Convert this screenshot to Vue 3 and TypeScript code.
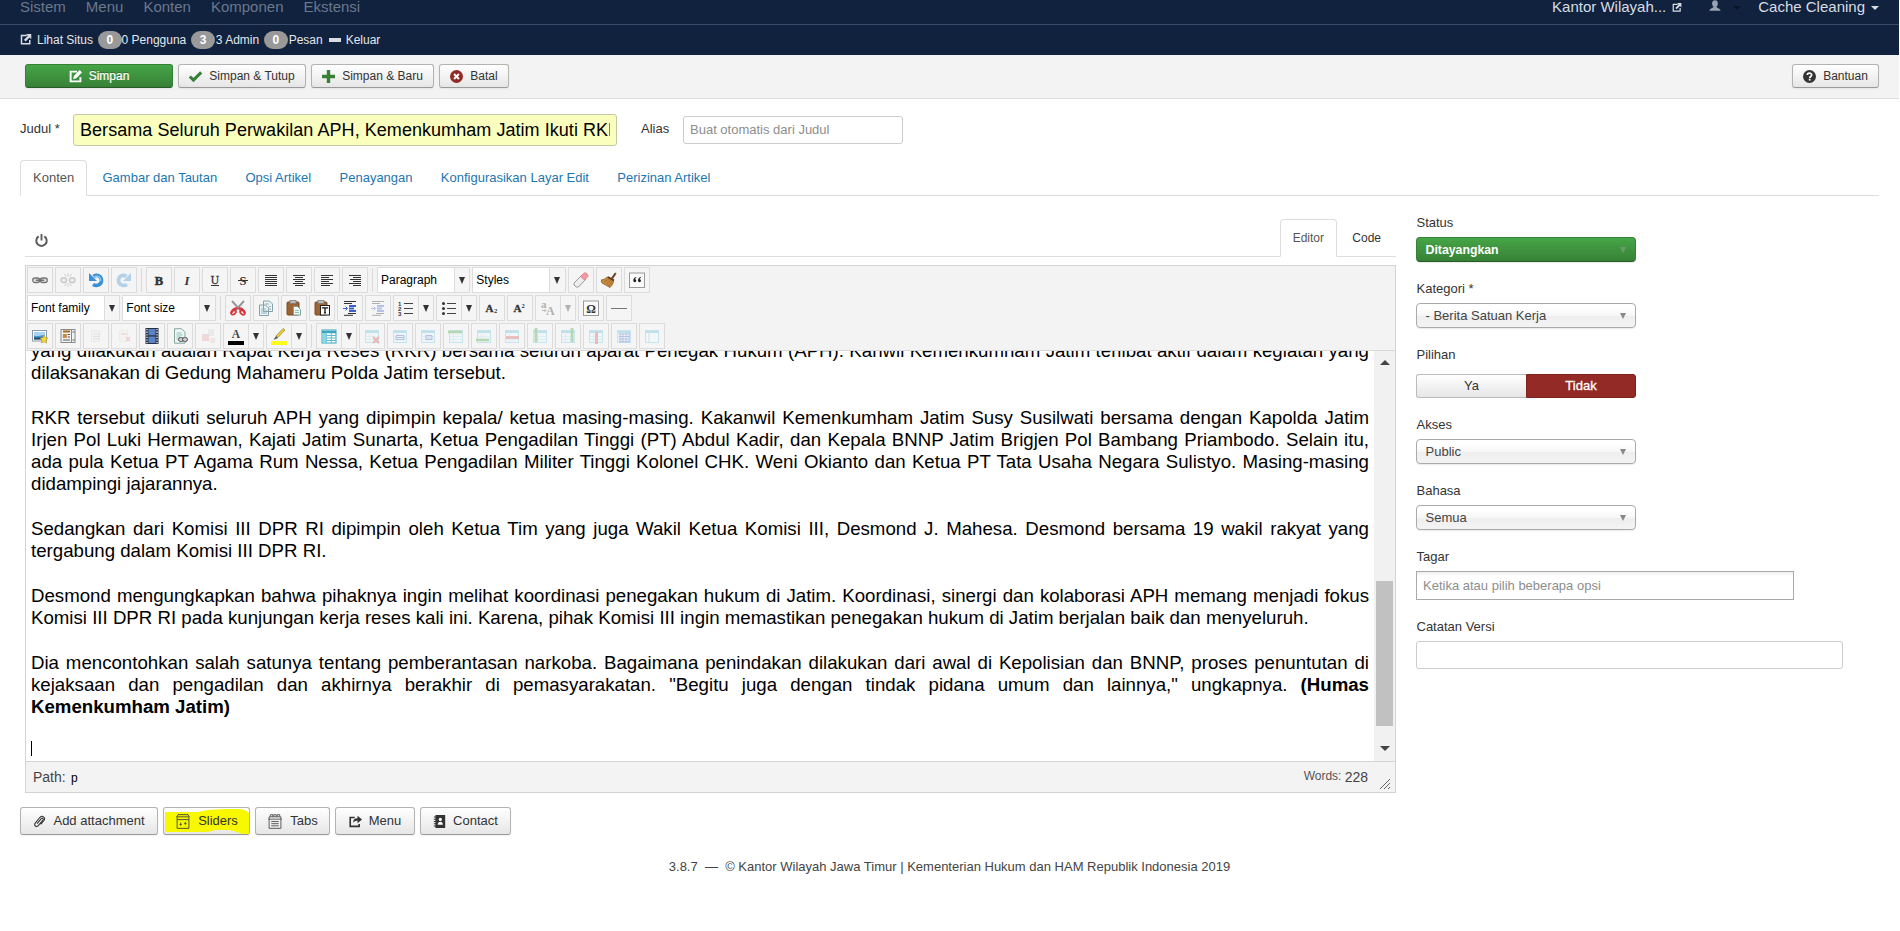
<script setup lang="ts">
interface Tool {
  kind?: 'btn' | 'sep' | 'list' | 'split'
  icon?: string
  label?: string
  off?: boolean
}

const share = '<path d="M9 2H2v11h11V8" fill="none" stroke="currentColor" stroke-width="2"/><path d="M8 0h7v7l-2.300-2.300L7.500 10 5.300 7.800l5.200-5.300z" fill="currentColor"/>'
const grid = (extra: string) =>
  `<rect x="1.500" y="2.500" width="13" height="12" fill="#e8f7fb" stroke="#74c6dd"/><path d="M1.500 4h13" stroke="#5ebbd6" stroke-width="2"/><path d="M1.500 8.500h13M1.500 11.500h13M5.500 4v10.500" stroke="#a5dcea" stroke-width=".8"/>${extra}`

const icons: Record<string, string> = {
  share,
  save: '<path d="M10 2H2v12h12V9" fill="none" stroke="currentColor" stroke-width="2.400"/><path d="M13 0l3 3-7 7-4 1.500L6 7.500z" fill="currentColor"/>',
  check: '<path d="M1 8l4.500 4.500L15 3" fill="none" stroke="#378137" stroke-width="3.800"/>',
  plus: '<path d="M8 0v16M0 8h16" stroke="#378137" stroke-width="4.200"/>',
  cancel: '<circle cx="8" cy="8" r="8" fill="#942a25"/><path d="M5 5l6 6M11 5l-6 6" stroke="#fff" stroke-width="2.400"/>',
  help: '<circle cx="8" cy="8" r="8" fill="#333"/><path d="M5.300 6.300C5.300 3 10.700 3 10.700 6.200 10.700 8 8.200 8 8.200 10" fill="none" stroke="#fff" stroke-width="2"/><path d="M7.100 11h2.200v2H7.100z" fill="#fff"/>',
  user: '<path d="M8 0c5 0 4.500 7 2 8.500 0 2 5 1.500 5.500 5.500H.5C1 10 6 10.500 6 8.500 3.500 7 3 0 8 0z" fill="currentColor"/>',
  power: '<path d="M4.500 3a6.400 6.400 0 1 0 7 0" fill="none" stroke="#5a5a5a" stroke-width="2.400"/><path d="M8 0v8" stroke="#5a5a5a" stroke-width="2.300"/>',
  clip: '<path d="M5 10.500l5.200-6c1.300-1.400 3.200.2 2 1.700L6.500 13c-2.200 2.500-6 0-3.800-3l6-7.200c2.600-2.900 7.300.4 4.800 4L9.500 11.500" fill="none" stroke="#333" stroke-width="1.300"/>',
  sliders: '<path d="M2.500.7h11M1.700 3h12.600v12.300H1.700zM1 3L3 .7M15 3L13 .7M1.700 6h12.600" fill="none" stroke="#4a4a3a" stroke-width="1"/><path d="M5.500 9v2.500M4.500 10.800l1 1.400 1-1.400zM10.500 12V9.500M9.500 10.200l1-1.400 1 1.400z" stroke="#4a4a3a" stroke-width=".7" fill="#4a4a3a"/>',
  tabs: '<path d="M3 3V.7h2.600V3M6.700 3V.7h2.600V3M10.400 3V.7H13V3M1.700 3h12.600v12.300H1.700zM.8 5.500h14.400M4 8h8M4 10.300h8M4 12.600h8" fill="none" stroke="#555" stroke-width="1"/>',
  menu: '<path d="M7 3H1.500v11h11v-3" fill="none" stroke="#333" stroke-width="2"/><path d="M5 9.500C5 5.500 7 4 10.500 4V1L16 5.500 10.500 10V7C8 7 6.500 7.500 5 9.500z" fill="#333"/>',
  contact: '<path d="M3 0h12v16H3z" fill="#333"/><path d="M1 2.500h3M1 5.300h3M1 8h3M1 10.700h3M1 13.500h3" stroke="#333" stroke-width="1.300"/><circle cx="9" cy="5.500" r="2" fill="#fff"/><path d="M5.800 12c0-5 6.400-5 6.400 0z" fill="#fff"/>',
  link: '<rect x=".7" y="6" width="7" height="4.500" rx="2.200" fill="#ddd" stroke="#777" stroke-width="1.300"/><rect x="8.300" y="6" width="7" height="4.500" rx="2.200" fill="#ddd" stroke="#777" stroke-width="1.300"/><path d="M4 8.200h8" stroke="#666" stroke-width="1.400"/>',
  unlink: '<rect x="1" y="6" width="5.500" height="4.500" rx="2" fill="#ddd" stroke="#777" stroke-width="1.300"/><rect x="9.500" y="6" width="5.500" height="4.500" rx="2" fill="#ddd" stroke="#777" stroke-width="1.300"/><path d="M8 1v4M8 11v4M4.500 2l1.500 2.500M11.500 2L10 4.500M4.500 14L6 11.500M11.500 14L10 11.500" stroke="#888"/>',
  undo: '<path d="M5.500 4.500C9 2 13.500 4 13.500 8.500c0 4-4.500 6.500-8.500 4" fill="none" stroke="#3b8fd6" stroke-width="3.600"/><path d="M1 1v8h8z" fill="#3b8fd6"/><path d="M6 5c4-2 7 0 7 4" fill="none" stroke="#9ccef5" stroke-width="1.200"/>',
  redo: '<path d="M10.500 4.500C7 2 2.500 4 2.500 8.500c0 4 4.500 6.500 8.500 4" fill="none" stroke="#3b8fd6" stroke-width="3.600"/><path d="M15 1v8H7z" fill="#3b8fd6"/>',
  bold: '<text x="8" y="12.500" text-anchor="middle" font-family="Liberation Serif,serif" font-weight="700" font-size="12.500" fill="#333" stroke="#333" stroke-width=".5">B</text>',
  italic: '<text x="8" y="12.500" text-anchor="middle" font-family="Liberation Serif,serif" font-weight="700" font-style="italic" font-size="12.500" fill="#333">I</text>',
  under: '<text x="8" y="11.500" text-anchor="middle" font-family="Liberation Serif,serif" font-size="11.500" fill="#333" stroke="#333" stroke-width=".3">U</text><path d="M4 13.500h8" stroke="#333"/>',
  strike: '<text x="8" y="12.500" text-anchor="middle" font-family="Liberation Serif,serif" font-weight="700" font-size="12.500" fill="#333">S</text><path d="M3 8.500h10" stroke="#333"/>',
  full: '<path d="M2 3.500h12M2 5.500h12M2 7.500h12M2 9.500h12M2 11.500h12M2 13.500h12" stroke="#333"/>',
  center: '<path d="M2 3.500h12M4 5.500h8M2 7.500h12M4 9.500h8M2 11.500h12M4 13.500h8" stroke="#333"/>',
  left: '<path d="M2 3.500h12M2 5.500h8M2 7.500h12M2 9.500h8M2 11.500h12M2 13.500h9" stroke="#333"/>',
  right: '<path d="M2 3.500h12M6 5.500h8M3 7.500h11M6 9.500h8M2 11.500h12M6 13.500h8" stroke="#333"/>',
  eraser: '<path d="M1 11l8-8 4 4-7.500 8H3.500L1 13z" fill="#eee" stroke="#999"/><path d="M7.500 4.500l3-3c1-1 2.500-.8 3.500.2s1.500 2.300.5 3.300l-3 3z" fill="#f59aa3" stroke="#d27580" stroke-width=".7"/>',
  broom: '<path d="M10 6l4-5.500 1.500 1L12 7z" fill="#6b4522"/><path d="M0 8c3 0 4.500-2 6.500-3l6 3c0 3-1 5-3.500 7.500L1 11z" fill="#c98a3f" stroke="#8b5d27" stroke-width=".8"/><path d="M7 5l6 3.500" stroke="#59351b" stroke-width="1.600"/><path d="M3 10l5-3M5 12l5-4M7.500 14l3.500-5" stroke="#8b5d27" stroke-width=".6"/>',
  quote: '<rect x=".5" y="1" width="15" height="14.500" fill="#fafafa" stroke="#999"/><path d="M7.300 5C4.800 5.300 4.300 7.300 4.300 8.700a1.500 1.500 0 1 0 1.800-1.500C6.100 6.500 6.500 6 7.300 5.800zM12 5C9.500 5.300 9 7.300 9 8.700a1.500 1.500 0 1 0 1.800-1.500c0-.7.4-1.200 1.200-1.400z" fill="#222"/>',
  cut: '<path d="M2 1l9 10M14 1L5 11" stroke="#999" stroke-width="2"/><path d="M7.500 8.500C5 8 1.500 10 1.500 13M8.500 8.500C11 8 14.500 10 14.500 13" fill="none" stroke="#d8363c" stroke-width="2.200"/><ellipse cx="3.500" cy="12.500" rx="2.500" ry="1.800" fill="none" stroke="#d8363c" stroke-width="1.800" transform="rotate(-35 3.500 12.500)"/><ellipse cx="12.500" cy="12.500" rx="2.500" ry="1.800" fill="none" stroke="#d8363c" stroke-width="1.800" transform="rotate(35 12.500 12.500)"/>',
  copy: '<path d="M5.500 1h6l3 3v7.500h-9zM1.500 5h6l3 3v7.500h-9z" fill="#eaf3f5" stroke="#8aa0a8"/><path d="M3 9h5M3 11h6M3 13h6M7 4h4M11 6.500h2M11 9h2" stroke="#8fb6bd"/>',
  paste: '<rect x="1" y="2" width="12" height="13" rx="1" fill="#9c6335" stroke="#7c4a22"/><rect x="4" y=".5" width="6" height="3" fill="#bbb" stroke="#777" stroke-width=".7"/><path d="M7.500 6.500h4l3 3V15h-7z" fill="#f3fbf9" stroke="#7da39a"/><path d="M9 10.500h4M9 12.500h4" stroke="#8fc2b7"/>',
  pastetext: '<rect x="1" y="2" width="12" height="13" rx="1" fill="#9c6335" stroke="#7c4a22"/><rect x="4" y=".5" width="6" height="3" fill="#bbb" stroke="#777" stroke-width=".7"/><rect x="6.500" y="5.500" width="9" height="9.500" fill="#fff" stroke="#222"/><path d="M8.500 8.500V7.800h5v.7M11 7.800v5M10 12.800h2" stroke="#111" stroke-width="1.300" fill="none"/>',
  indent: '<path d="M2 1.500h12M6 13.500h8M2 15.300h9M2 3.500h8" stroke="#333"/><path d="M7 6h7M7 8.500h5M7 11h7" stroke="#3f62c9" stroke-width="1.800"/><path d="M1 8.500h4M3.500 6.500l2 2-2 2" stroke="#3f62c9" fill="none"/>',
  num: '<path d="M6 3.500h9M6 8.500h9M6 13.500h9" stroke="#444"/><text x="0" y="5.500" font-family="Liberation Sans,sans-serif" font-weight="700" font-size="6" fill="#333">1</text><text x="0" y="10.700" font-family="Liberation Sans,sans-serif" font-weight="700" font-size="6" fill="#333">2</text><text x="0" y="15.800" font-family="Liberation Sans,sans-serif" font-weight="700" font-size="6" fill="#333">3</text>',
  bul: '<path d="M6 3.500h9M6 8.500h9M6 13.500h9" stroke="#444"/><circle cx="2.500" cy="3.500" r="1.500" fill="#333"/><circle cx="2.500" cy="8.500" r="1.500" fill="#333"/><circle cx="2.500" cy="13.500" r="1.500" fill="#333"/>',
  sub: '<text x="1.500" y="12" font-family="Liberation Serif,serif" font-weight="700" font-size="11" fill="#333" stroke="#333" stroke-width=".3">A</text><text x="10" y="12.500" font-family="Liberation Serif,serif" font-weight="700" font-size="6.500" fill="#333">2</text>',
  sup: '<text x="1.500" y="12" font-family="Liberation Serif,serif" font-weight="700" font-size="11" fill="#333" stroke="#333" stroke-width=".3">A</text><text x="9.500" y="7.500" font-family="Liberation Serif,serif" font-weight="700" font-size="6.500" fill="#333">2</text>',
  cas: '<text x="1" y="8" font-family="Liberation Serif,serif" font-weight="700" font-size="11" fill="#333">a</text><text x="6" y="15" font-family="Liberation Serif,serif" font-weight="700" font-size="12" fill="#333">A</text><path d="M2 10.500h4M4.500 9l1.500 1.500L4.500 12" fill="none" stroke="#555"/>',
  omega: '<rect x=".5" y="1" width="15" height="14.500" fill="#fafafa" stroke="#999"/><text x="8" y="12.500" text-anchor="middle" font-family="Liberation Serif,serif" font-weight="700" font-size="12" fill="#333">Ω</text>',
  hr: '<path d="M0 8.500h16" stroke="#777"/>',
  image: '<rect x=".5" y="2.500" width="14" height="10.500" fill="#fff" stroke="#8a9aa8"/><rect x="2" y="4" width="11" height="7.500" fill="#3f94d1"/><path d="M2 4h11v3.500c-5-1-7 2-11 0z" fill="#a9d4ef"/><path d="M2 9.500h11v2H2z" fill="#2a4b5e"/><path d="M12 7l1.400 2.800 2.600.4-2 2 .6 3-2.600-1.400L9.400 15l.6-2.900-2-2 2.800-.3z" fill="#f6d93a" stroke="#b8971c" stroke-width=".6"/>',
  page: '<rect x="1" y="1.500" width="14" height="13" fill="#f4f4f4" stroke="#888"/><path d="M11.500 1.500v13" stroke="#888"/><path d="M3 3.500h7" stroke="#a6691d" stroke-width="2"/><rect x="2.800" y="6" width="4" height="4" fill="#c98a3f"/><path d="M7.500 6.500H10M7.500 9H10M3 12h7M12.500 4h2M12.500 12h2" stroke="#555"/>',
  doc: '<path d="M3.500 2.500h8v11h-8z" fill="#eef2ee" stroke="#cfd8cf"/><path d="M5 6h7M5 8.500h7M5 11h7" stroke="#aec9ae"/>',
  docx: '<path d="M3.500 2.500h8v11h-8z" fill="#f7efef" stroke="#ddd"/><path d="M5 6h6" stroke="#e3b8b0" stroke-width="2"/><path d="M10 9l4 4M14 9l-4 4" stroke="#e58a8a" stroke-width="1.500"/>',
  film: '<rect x="1.500" y="0" width="13" height="16" fill="#263041"/><rect x="4.500" y="1" width="7" height="6.300" fill="#5a84c6"/><rect x="4.500" y="8.500" width="7" height="6.500" fill="#5a84c6"/><path d="M3 1v15M13 1v15" stroke="#e5e9ef" stroke-width="1.300" stroke-dasharray="1.300 1.300"/>',
  doclink: '<path d="M2.500.7h7l3.500 3.500v11H2.500z" fill="#edf7f5" stroke="#86a59f"/><path d="M4.500 5h5M4.500 7h6M4.500 9h4M4.500 11h3" stroke="#8fc2b7"/><rect x="6.500" y="9.500" width="5" height="4" rx="2" fill="#ccc" stroke="#555"/><rect x="10.500" y="9.500" width="5" height="4" rx="2" fill="#ccc" stroke="#555"/>',
  blocks: '<path d="M8 1h6v7H8z" fill="#d8d8e0"/><path d="M2 6h7v7H2z" fill="#e5a3a3"/><path d="M10 10h5v5h-5z" fill="#e6cccc"/>',
  fore: '<text x="8" y="9.500" text-anchor="middle" font-family="Liberation Serif,serif" font-weight="700" font-size="11.500" fill="#444">A</text><path d="M0 13h16v4H0z" fill="#000"/>',
  back: '<path d="M0 13h16v4H0z" fill="#fcfc1c"/><path d="M5 8l7-7.500 2 1.500-7 7.500z" fill="#e8cf3a" stroke="#8a7a2a" stroke-width=".6"/><path d="M5 8l2 2-4.500 2z" fill="#555"/>',
  table: '<rect x="1" y="2" width="14" height="13" fill="#fff" stroke="#3ba4bf"/><path d="M1 4h14" stroke="#3ba4bf" stroke-width="2.500"/><path d="M1 7.500h14M1 10h14M1 12.500h14M5.500 4v11M10.300 4v11" stroke="#5dbbd1"/><path d="M1.500 5h4v9.500h-4z" fill="#8fd4e4"/>',
  tdel: grid('<path d="M9 9l6 6M15 9l-6 6" stroke="#d44" stroke-width="2.200"/>'),
  trow: grid('<path d="M4 7.500h8v4H4z" fill="#dde7fb" stroke="#3563c4"/><path d="M4 9.500h8" stroke="#3563c4"/>'),
  tcell: grid('<path d="M6 7.500h6v4H6z" fill="#a9c2f2" stroke="#3563c4"/>'),
  tup: grid('<path d="M0 4h14" stroke="#3ea53e" stroke-width="2.600"/>'),
  tdown: grid('<path d="M0 12h13" stroke="#3ea53e" stroke-width="2.600"/>'),
  trdel: grid('<path d="M2 9.500h13" stroke="#d24a4c" stroke-width="2.600"/>'),
  tcl: grid('<path d="M4 0v14" stroke="#3ea53e" stroke-width="2.800"/>'),
  tcr: grid('<path d="M12 0v14" stroke="#3ea53e" stroke-width="2.800"/>'),
  tcdel: grid('<path d="M8.500 4v12" stroke="#d24a4c" stroke-width="2.800"/>'),
  tsplit: grid('<path d="M3 6h11M3 8.500h11M3 11h11M3 13.500h11M4 5v10M7 5v10M10 5v10M13 5v10" stroke="#3563c4" stroke-width=".9"/>'),
  tmerge: '<rect x="1.500" y="2.500" width="13" height="12" fill="#f4fbfd" stroke="#74c6dd"/><path d="M1.500 4h13" stroke="#5ebbd6" stroke-width="2"/><path d="M5 4v10.500" stroke="#74c6dd"/>',
}

const b = (icon: string, off = false): Tool => ({ kind: 'btn', icon, off })
const s = (icon: string, off = false): Tool => ({ kind: 'split', icon, off })
const l = (label: string): Tool => ({ kind: 'list', label })
const sep: Tool = { kind: 'sep' }

const toolRows: Tool[][] = [
  [b('link'), b('unlink', true), b('undo'), b('redo', true), sep, b('bold'), b('italic'), b('under'), b('strike'), b('full'), b('center'), b('left'), b('right'), sep, l('Paragraph'), l('Styles'), b('eraser'), b('broom'), b('quote')],
  [l('Font family'), l('Font size'), sep, b('cut'), b('copy'), b('paste'), b('pastetext'), b('indent'), b('indent', true), s('num'), s('bul'), b('sub'), b('sup'), s('cas', true), b('omega'), b('hr')],
  [b('image'), b('page'), b('doc', true), b('docx', true), b('film'), b('doclink'), b('blocks', true), s('fore'), s('back'), sep, s('table'), b('tdel', true), b('trow', true), b('tcell', true), b('tup', true), b('tdown', true), b('trdel', true), b('tcl', true), b('tcr', true), b('tcdel', true), b('tsplit', true), b('tmerge', true)],
]

const navItems = ['Sistem', 'Menu', 'Konten', 'Komponen', 'Ekstensi']
const tabs = ['Konten', 'Gambar dan Tautan', 'Opsi Artikel', 'Penayangan', 'Konfigurasikan Layar Edit', 'Perizinan Artikel']

const paragraphs: string[][] = [
  [
    'yang dilakukan adalah Rapat Kerja Reses (RKR) bersama seluruh aparat Penegak Hukum (APH). Kanwil Kemenkumham Jatim terlibat aktif dalam kegiatan yang',
    'dilaksanakan di Gedung Mahameru Polda Jatim tersebut.',
  ],
  [
    'RKR tersebut diikuti seluruh APH yang dipimpin kepala/ ketua masing-masing. Kakanwil Kemenkumham Jatim Susy Susilwati bersama dengan Kapolda Jatim',
    'Irjen Pol Luki Hermawan, Kajati Jatim Sunarta, Ketua Pengadilan Tinggi (PT) Abdul Kadir, dan Kepala BNNP Jatim Brigjen Pol Bambang Priambodo. Selain itu,',
    'ada pula Ketua PT Agama Rum Nessa, Ketua Pengadilan Militer Tinggi Kolonel CHK. Weni Okianto dan Ketua PT Tata Usaha Negara Sulistyo. Masing-masing',
    'didampingi jajarannya.',
  ],
  [
    'Sedangkan dari Komisi III DPR RI dipimpin oleh Ketua Tim yang juga Wakil Ketua Komisi III, Desmond J. Mahesa. Desmond bersama 19 wakil rakyat yang',
    'tergabung dalam Komisi III DPR RI.',
  ],
  [
    'Desmond mengungkapkan bahwa pihaknya ingin melihat koordinasi penegakan hukum di Jatim. Koordinasi, sinergi dan kolaborasi APH memang menjadi fokus',
    'Komisi III DPR RI pada kunjungan kerja reses kali ini. Karena, pihak Komisi III ingin memastikan penegakan hukum di Jatim berjalan baik dan menyeluruh.',
  ],
]

const xtd = [
  { icon: 'clip', label: 'Add attachment', cls: 'x-attach' },
  { icon: 'sliders', label: 'Sliders', cls: 'x-sliders' },
  { icon: 'tabs', label: 'Tabs', cls: 'x-tabs' },
  { icon: 'menu', label: 'Menu', cls: 'x-menu' },
  { icon: 'contact', label: 'Contact', cls: 'x-contact' },
]
</script>

<template>
  <div class="page">
    <nav class="nav">
      <a v-for="n in navItems" :key="n" class="nav-item">{{ n }}</a>
      <span class="grow"></span>
      <span class="nav-r">Kantor Wilayah...</span>
      <svg class="ic ic-site" viewBox="0 0 16 16" v-html="icons.share"></svg>
      <svg class="ic ic-user" viewBox="0 0 16 14" v-html="icons.user"></svg>
      <span class="caret dark"></span>
      <span class="nav-r">Cache Cleaning</span>
      <span class="caret"></span>
    </nav>
    <div class="sub">
      <svg class="ic ic-sub" viewBox="0 0 16 16" v-html="icons.share"></svg>
      <span class="view">Lihat Situs</span>
      <span class="badge">0</span><span class="t1">0 Pengguna</span>
      <span class="badge">3</span><span class="t2">3 Admin</span>
      <span class="badge">0</span><span class="t3">Pesan</span>
      <span class="minus"></span><span>Keluar</span>
    </div>

    <div class="bar">
      <button class="btn save"><svg class="ic" viewBox="0 0 16 16" v-html="icons.save"></svg>Simpan</button>
      <button class="btn w128"><svg class="ic" viewBox="0 0 16 16" v-html="icons.check"></svg>Simpan &amp; Tutup</button>
      <button class="btn w123"><svg class="ic" viewBox="0 0 16 16" v-html="icons.plus"></svg>Simpan &amp; Baru</button>
      <button class="btn w70"><svg class="ic" viewBox="0 0 16 16" v-html="icons.cancel"></svg>Batal</button>
      <span class="grow"></span>
      <button class="btn w87"><svg class="ic" viewBox="0 0 16 16" v-html="icons.help"></svg>Bantuan</button>
    </div>

    <div class="title-row">
      <label class="l-title">Judul *</label>
      <div class="title-input"><span>Bersama Seluruh Perwakilan APH, Kemenkumham Jatim Ikuti RKR</span></div>
      <label class="l-alias">Alias</label>
      <div class="alias-input">Buat otomatis dari Judul</div>
    </div>

    <div class="tabs">
      <a v-for="(t, i) in tabs" :key="t" class="tab" :class="{ active: i === 0 }">{{ t }}</a>
    </div>

    <main class="main">
      <section class="left">
        <div class="ed-tabs">
          <svg class="ic ic-power" viewBox="0 0 16 16" v-html="icons.power"></svg>
          <span class="grow"></span>
          <a class="tab active">Editor</a>
          <a class="tab code">Code</a>
        </div>
        <div class="editor">
          <div class="tools">
            <div v-for="(row, r) in toolRows" :key="r" class="tool-row">
              <template v-for="(t, i) in row" :key="i">
                <span v-if="t.kind === 'sep'" class="sep"></span>
                <span v-else-if="t.kind === 'list'" class="list"><span class="list-t">{{ t.label }}</span><span class="arr"><i></i></span></span>
                <span v-else class="tool" :class="{ split: t.kind === 'split', off: t.off }">
                  <span class="face"><svg class="tic" viewBox="0 0 16 17" v-html="icons[t.icon || '']"></svg></span>
                  <span v-if="t.kind === 'split'" class="arr"><i></i></span>
                </span>
              </template>
            </div>
          </div>
          <div class="doc">
            <div class="text">
              <div v-for="(p, i) in paragraphs" :key="i" class="p">
                <div v-for="(line, k) in p" :key="k" class="line" :class="{ last: k === p.length - 1 }">{{ line }}</div>
              </div>
              <div class="p">
                <div class="line">Dia mencontohkan salah satunya tentang pemberantasan narkoba. Bagaimana penindakan dilakukan dari awal di Kepolisian dan BNNP, proses penuntutan di</div>
                <div class="line">kejaksaan dan pengadilan dan akhirnya berakhir di pemasyarakatan. "Begitu juga dengan tindak pidana umum dan lainnya," ungkapnya. <b>(Humas</b></div>
                <div class="line last"><b>Kemenkumham Jatim)</b></div>
              </div>
              <div class="cursor"></div>
            </div>
            <div class="scroll">
              <i class="up"></i>
              <i class="thumb"></i>
              <i class="down"></i>
            </div>
          </div>
          <div class="status">
            <span class="path">Path:</span><span class="pp">p</span>
            <span class="grow"></span>
            <span class="words">Words:</span><span class="count">228</span>
            <svg class="grip" viewBox="0 0 10 10"><path d="M0 10L10 0M4 10l6-6M8 10l2-2" stroke="#666" /></svg>
          </div>
        </div>
        <div class="xtd">
          <button v-for="x in xtd" :key="x.icon" class="btn big" :class="x.cls">
            <svg v-if="x.icon === 'sliders'" class="marker" viewBox="0 0 87 28"><path d="M2 5L36 5C44 2 60 2 74 2Q83 2 86 6V27H79Q72 24 66 23L52 23Q48 25 42 25L2 25z" fill="#f8f800" /></svg>
            <svg class="ic" viewBox="0 0 16 16" v-html="icons[x.icon]"></svg><span>{{ x.label }}</span>
          </button>
        </div>
      </section>

      <aside class="side">
        <label>Status</label>
        <div class="select green"><b>Ditayangkan</b><i></i></div>
        <label>Kategori *</label>
        <div class="select"><span>- Berita Satuan Kerja</span><i></i></div>
        <label>Pilihan</label>
        <div class="toggle"><span class="ya">Ya</span><span class="tidak">Tidak</span></div>
        <label>Akses</label>
        <div class="select"><span>Public</span><i></i></div>
        <label>Bahasa</label>
        <div class="select"><span>Semua</span><i></i></div>
        <label>Tagar</label>
        <div class="tags">Ketika atau pilih beberapa opsi</div>
        <label>Catatan Versi</label>
        <div class="note"></div>
      </aside>
    </main>

    <footer class="foot">3.8.7 &nbsp;—&nbsp; © Kantor Wilayah Jawa Timur | Kementerian Hukum dan HAM Republik Indonesia 2019</footer>
  </div>
</template>

<style>
body { margin: 0; background: #fff; }
</style>

<style scoped>
* { box-sizing: border-box; }
.page { width: 1899px; height: 931px; overflow: hidden; font: 13px/18px "Liberation Sans", Arial, sans-serif; color: #333; white-space: nowrap; background: #fff; }
.grow { flex: 1; }
.ic { display: block; width: 12px; height: 12px; flex: none; overflow: visible; }
.nav { display: flex; align-items: flex-start; height: 25px; padding: 0 20px; background: #10223e; border-bottom: 1px solid #3a4b69; font-size: 15px; line-height: 14px; }
.nav-item { margin: 0 20px 0 0; color: #6b778a; }
.nav-r { color: #d9dde3; }
.ic-site { width: 10px; height: 10px; margin: 3px 27px 0 6px; color: #d9dde3; }
.ic-user { width: 12px; height: 11px; margin: 0 12px 0 0; color: #97a1b0; }
.caret { width: 0; height: 0; margin: 6px 0 0 6px; border: 4px solid transparent; border-top-color: #d9dde3; border-bottom: 0; }
.caret.dark { margin: 6px 17px 0 0; border-top-color: #0a1526; }
.sub { display: flex; align-items: center; height: 30px; padding: 0 20px; background: #10223e; color: #e3e6ea; font-size: 12px; }
.ic-sub { color: #d9dde3; }
.view { margin: 0 5px; }
.badge { width: 23.500px; height: 18px; border-radius: 9px; background: #999; color: #fff; font-weight: 700; text-align: center; line-height: 18px; }
.t1 { margin: 0 5px 0 0; }
.t2 { margin: 0 5px 0 1px; }
.t3 { margin: 0 6px 0 1px; }
.minus { width: 12px; height: 4px; margin-right: 5px; background: #d9dde3; }
.bar { display: flex; gap: 5px; align-items: flex-start; height: 44px; padding: 9px 20px 0 25px; background: #f3f3f3; border-bottom: 1px solid #dedede; }
.btn { display: flex; align-items: center; justify-content: center; height: 24px; padding: 0; border: 1px solid #b3b3b3; border-bottom-color: #999; border-radius: 3px; background: linear-gradient(#fff, #e6e6e6); color: #333; font: 12px/16px "Liberation Sans", Arial, sans-serif; box-shadow: 0 1px 2px rgba(0, 0, 0, .06); }
.btn .ic { margin-right: 7px; }
.bar .ic { width: 13px; height: 13px; }
.save { width: 148px; color: #fff; background: linear-gradient(#46a546, #378137); border-color: #378137 #378137 #265a26; text-shadow: 0 -1px 0 rgba(0, 0, 0, .3); -webkit-text-stroke: .2px #fff; }
.w128 { width: 128px; }
.w123 { width: 123px; }
.w70 { width: 70px; }
.w87 { width: 87px; }
.title-row { display: flex; align-items: flex-start; height: 61px; padding: 15px 20px 0; }
.l-title { width: 53px; margin-top: 6px; }
.title-input { width: 544px; height: 32px; padding: 0 6px; border: 1px solid #c4c8a4; border-radius: 3px; background: #faffbd; color: #000; font-size: 18px; line-height: 30px; letter-spacing: .05px; }
.title-input span { display: block; overflow: hidden; }
.l-alias { width: 42px; margin: 6px 0 0 24px; }
.alias-input { width: 220px; height: 28px; margin-top: 2px; padding: 0 6px; border: 1px solid #ccc; border-radius: 3px; color: #8e8e8e; line-height: 26px; }
.tabs { display: flex; height: 36px; margin: 0 20px; border-bottom: 1px solid #ddd; }
.tab { height: 36px; margin-right: 2.300px; padding: 0 12px; border: 1px solid transparent; border-radius: 4px 4px 0 0; color: #1c76b0; line-height: 34px; }
.tab.active { border-color: #ddd #ddd #fff; background: #fff; color: #555; }
.main { display: flex; align-items: flex-start; height: 640px; }
.left { width: 1396px; padding: 23px 0 0 25px; }
.ed-tabs { display: flex; height: 38px; border-bottom: 1px solid #ddd; font-size: 12px; }
.ed-tabs .tab { height: 38px; line-height: 36px; }
.ed-tabs .code { margin-right: 0; padding-right: 14px; color: #333; }
.ic-power { width: 13px; height: 13px; margin: 15px 0 0 10px; }
.editor { margin-top: 8px; border: 1px solid #d3d3d3; }
.tools { height: 85px; padding-top: 1px; background: #f3f3f3; border-bottom: 1px solid #d8d8d8; }
.tool-row { display: flex; gap: 2px; height: 26px; margin: 0 0 2px 1px; }
.tool { display: flex; width: 26px; height: 26px; border: 1px solid #dcdcdc; background: #f5f5f5; }
.tool.split { width: 41px; }
.face { display: flex; width: 24px; flex: none; align-items: center; justify-content: center; }
.tic { display: block; width: 16px; height: 17px; }
.off .tic, .off .arr i { opacity: .35; }
.arr { display: flex; flex: 1; align-items: center; justify-content: center; border-left: 1px solid #dcdcdc; background: #f5f5f5; }
.arr i { border: 3.500px solid transparent; border-top: 7px solid #333; border-bottom: 0; }
.sep { width: 1px; height: 24px; margin: 1px 2px 0; background: #dadada; }
.list { display: flex; width: 93.300px; height: 26px; border: 1px solid #dcdcdc; background: #fff; color: #000; font-size: 12px; line-height: 24px; }
.list-t { width: 76px; padding-left: 3px; }
.doc { display: flex; height: 410px; overflow: hidden; }
.text { width: 1348px; padding: 0 5px; margin-top: -11px; color: #000; font-size: 18.670px; line-height: 22px; }
.p { margin-bottom: 23px; }
.line { height: 22px; text-align: justify; text-align-last: justify; white-space: normal; }
.line.last { text-align-last: left; white-space: nowrap; }
.cursor { width: 1px; height: 15px; margin-top: 2px; background: #000; }
.scroll { display: flex; flex-direction: column; align-items: center; width: 21px; background: #f1f1f1; }
.up { margin-top: 9px; border: 5px solid transparent; border-bottom-color: #444; border-top: 0; }
.thumb { width: 17px; height: 145px; margin: 216px 0 20px; background: #c1c1c1; }
.down { border: 5px solid transparent; border-top-color: #444; border-bottom: 0; }
.status { display: flex; height: 31px; padding: 0 5px 0 7px; border-top: 1px solid #d3d3d3; background: #f3f3f3; line-height: 30px; }
.path { width: 38px; font-size: 14px; color: #444; }
.pp { font-size: 12px; line-height: 32px; color: #000; }
.words { width: 41px; font-size: 12px; line-height: 28px; color: #555; }
.count { font-size: 14px; color: #444; line-height: 31px; }
.grip { width: 10px; height: 10px; margin: 17px 0 0 12px; }
.xtd { display: flex; gap: 5px; margin: 14px 0 0 -5px; }
.big { position: relative; height: 28px; font-size: 13px; }
.big .ic { position: relative; width: 13px; height: 13px; margin-right: 7px; }
.big span { position: relative; }
.big.x-attach { width: 138px; }
.big.x-sliders { width: 87px; }
.big.x-tabs { width: 75px; }
.big.x-menu { width: 80px; }
.big.x-contact { width: 91px; }
.big.x-sliders .ic, .big.x-tabs .ic { width: 16px; height: 15px; margin-right: 7px; }
.marker { position: absolute; left: -1px; top: -1px; width: 87px; height: 28px; }
.side { width: 483px; padding: 18px 0 0 20px; }
.side label { display: block; height: 18px; margin: 0 0 5px .5px; }
.select { display: flex; align-items: center; justify-content: space-between; width: 220px; height: 25px; margin-bottom: 18px; padding: 0 9px 0 8.500px; border: 1px solid #aaa; border-radius: 4px; background: linear-gradient(#fff 20%, #f6f6f6 50%, #eee 52%, #f4f4f4 100%); color: #444; box-shadow: 0 1px 1px rgba(0, 0, 0, .08); }
.select i { border: 3.500px solid transparent; border-top: 6px solid #888; border-bottom: 0; }
.select.green { background: linear-gradient(#46a546, #378137); border-color: #378137 #378137 #265a26; color: #fff; }
.select.green b { font-size: 12.300px; }
.select.green i { border-top-color: #6a9a6a; }
.toggle { display: flex; width: 220px; height: 24px; margin: 10px 0 18px; line-height: 22px; text-align: center; }
.ya { width: 110px; border: 1px solid #bbb; border-right: 0; border-radius: 3px 0 0 3px; background: linear-gradient(#fff, #e6e6e6); }
.tidak { width: 110px; border: 1px solid #7a221e; border-radius: 0 3px 3px 0; background: #942a25; color: #fff; -webkit-text-stroke: .3px #fff; }
.tags { width: 378px; height: 29px; margin-bottom: 18px; padding-left: 6px; border: 1px solid #aaa; background: linear-gradient(#eee 1%, #fff 15%); color: #8e8e8e; line-height: 27px; }
.note { width: 427px; height: 28px; border: 1px solid #ccc; border-radius: 3px; }
.foot { margin-top: 22px; text-align: center; color: #444; }
</style>
